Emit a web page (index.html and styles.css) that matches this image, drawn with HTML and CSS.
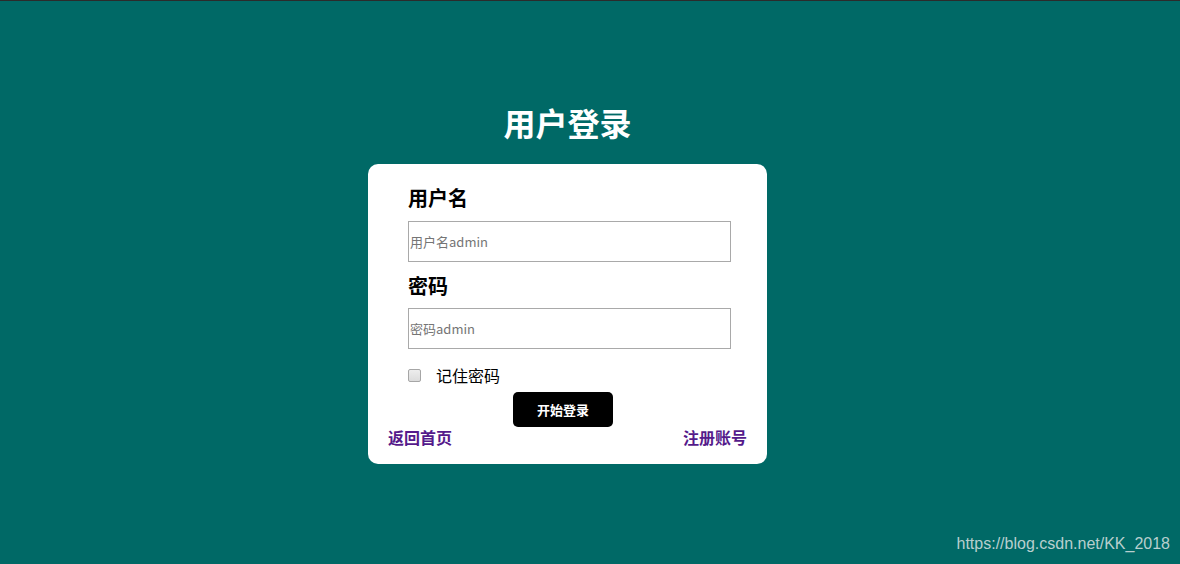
FILE: index.html
```html
<!DOCTYPE html>
<html lang="zh-CN">
<head>
<meta charset="utf-8">
<title>用户登录</title>
<link rel="stylesheet" href="styles.css">
</head>
<body>
<div class="page">
  <h1 class="title">用户登录</h1>
  <form class="card">
    <div class="fields">
      <label class="label" for="user">用户名</label>
      <input class="input" id="user" type="text" placeholder="用户名admin">
      <label class="label label-second" for="pwd">密码</label>
      <input class="input input-second" id="pwd" type="password" placeholder="密码admin">
      <div class="remember">
        <input class="check" type="checkbox" id="rem">
        <label for="rem" class="remember-text">记住密码</label>
      </div>
    </div>
    <div class="btn-row">
      <button type="button" class="btn">开始登录</button>
    </div>
    <div class="links">
      <a class="link" href="#">返回首页</a>
      <a class="link" href="#">注册账号</a>
    </div>
  </form>
</div>
<div class="watermark">https://blog.csdn.net/KK_2018</div>
</body>
</html>
```

FILE: styles.css
```css
html, body {
  margin: 0;
  padding: 0;
  height: 100%;
}
body {
  background: #006966;
  border-top: 1px solid #2b2b2b;
  box-sizing: border-box;
  font-family: "Liberation Sans", "Noto Sans CJK SC", sans-serif;
  overflow: hidden;
}
.page {
  width: 1135px;
  display: flex;
  flex-direction: column;
  align-items: center;
  padding-top: 101px;
}
.title {
  margin: 0 0 22px;
  font-size: 32px;
  line-height: 40px;
  font-weight: bold;
  color: #ffffff;
  font-family: "Noto Sans CJK SC", sans-serif;
}
.card {
  width: 399px;
  box-sizing: border-box;
  background: #ffffff;
  border-radius: 10px;
  padding: 22px 20px 17px;
  margin: 0;
}
.fields {
  padding-left: 20px;
  padding-right: 16px;
  display: flex;
  flex-direction: column;
  align-items: flex-start;
}
.label {
  display: block;
  font-family: "Noto Sans CJK SC", sans-serif;
  font-size: 20px;
  line-height: 24px;
  font-weight: bold;
  color: #000;
  margin-bottom: 11px;
}
.label-second {
  margin-top: 12px;
  margin-bottom: 10px;
}
.input {
  width: 323px;
  height: 41px;
  box-sizing: border-box;
  border: 1px solid #a9a9a9;
  padding: 0 0 0 1px;
  margin: 0;
  font-family: "Noto Sans CJK SC", sans-serif;
  font-size: 13px;
  color: #333;
  background: #fff;
  outline: none;
}
.input::placeholder {
  color: #757575;
}
.remember {
  display: flex;
  align-items: center;
  gap: 15px;
  margin-top: 16px;
  height: 20px;
}
.check {
  -webkit-appearance: none;
  appearance: none;
  width: 13px;
  height: 13px;
  margin: 0;
  box-sizing: border-box;
  border: 1px solid #a6a6a6;
  border-radius: 2px;
  background: linear-gradient(#ededed, #dcdcdc);
}
.remember-text {
  font-family: "Noto Sans CJK SC", sans-serif;
  font-size: 16px;
  line-height: 20px;
  color: #000;
}
.btn-row {
  display: flex;
  padding-left: 125px;
  margin-top: 7px;
}
.btn {
  width: 100px;
  height: 35px;
  border: none;
  border-radius: 5px;
  background: #000;
  color: #fff;
  font-family: "Noto Sans CJK SC", sans-serif;
  font-size: 13px;
  font-weight: bold;
  padding: 0;
  cursor: pointer;
}
.links {
  display: flex;
  justify-content: space-between;
  margin-top: 0;
}
.link {
  font-family: "Noto Sans CJK SC", sans-serif;
  font-size: 16px;
  line-height: 20px;
  font-weight: bold;
  color: #551a8b;
  text-decoration: none;
}
.watermark {
  position: absolute;
  right: 10px;
  bottom: 11px;
  font-family: "Liberation Sans", sans-serif;
  font-size: 16px;
  line-height: 18px;
  color: #b8cfce;
}
```
